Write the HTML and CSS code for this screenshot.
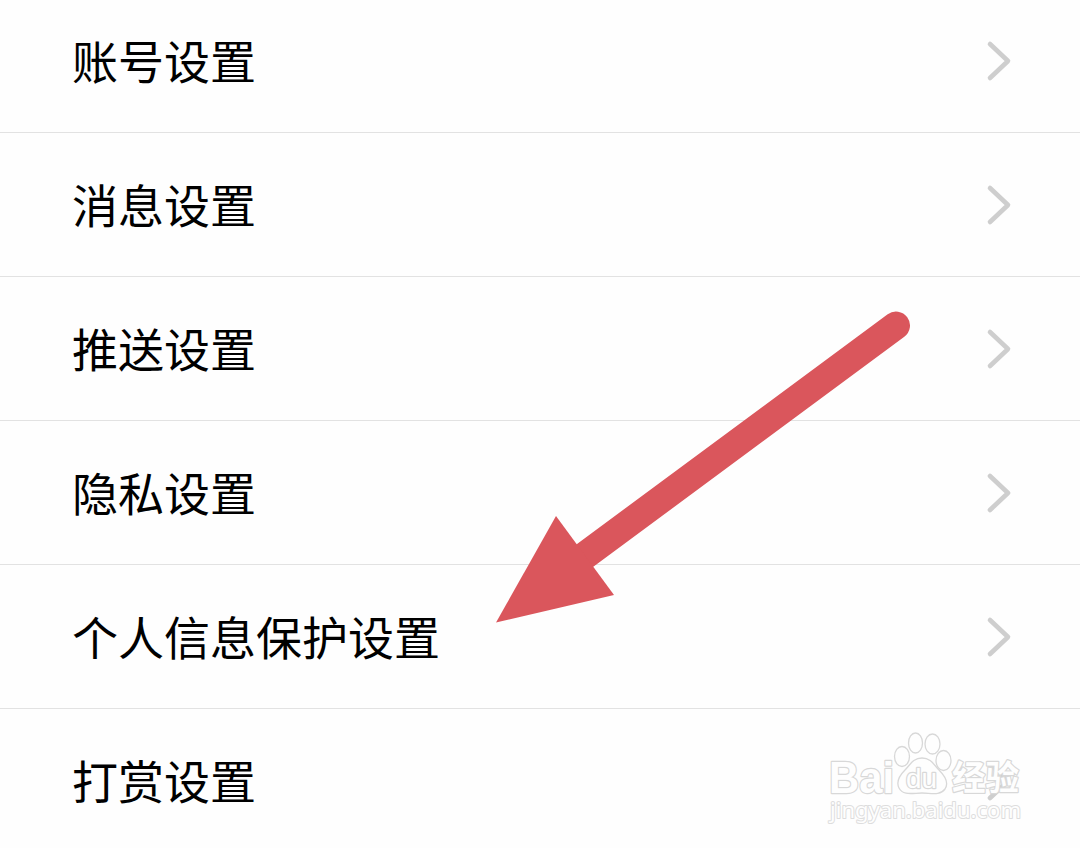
FILE: index.html
```html
<!DOCTYPE html>
<html lang="zh-CN">
<head>
    <meta charset="UTF-8">
    <meta name="viewport" content="width=device-width, initial-scale=1.0">
    <title>设置</title>
    <link rel="stylesheet" href="styles.css">
</head>
<body>
    <div class="settings-page">
        <ul class="settings-list">
            <li class="settings-item">
                <span>账号设置</span>
                <svg class="chevron" viewBox="0 0 26 44"><path d="M4 5L22 22L4 39"/></svg>
            </li>
            <li class="settings-item">
                <span>消息设置</span>
                <svg class="chevron" viewBox="0 0 26 44"><path d="M4 5L22 22L4 39"/></svg>
            </li>
            <li class="settings-item">
                <span>推送设置</span>
                <svg class="chevron" viewBox="0 0 26 44"><path d="M4 5L22 22L4 39"/></svg>
            </li>
            <li class="settings-item">
                <span>隐私设置</span>
                <svg class="chevron" viewBox="0 0 26 44"><path d="M4 5L22 22L4 39"/></svg>
            </li>
            <li class="settings-item">
                <span>个人信息保护设置</span>
                <svg class="chevron" viewBox="0 0 26 44"><path d="M4 5L22 22L4 39"/></svg>
            </li>
            <li class="settings-item">
                <span>打赏设置</span>
                <svg class="chevron" viewBox="0 0 26 44"><path d="M4 5L22 22L4 39"/></svg>
            </li>
        </ul>

        <!-- arrow -->
        <svg class="arrow" viewBox="0 0 420 316">
            <path class="arrow-line" d="M90 247.5L401 17.5"/>
            <path class="arrow-head" d="M1 314.5L61 208L119 287Z"/>
        </svg>

        <!-- watermark -->
        <svg class="watermark" viewBox="0 0 230 115">
            <ellipse cx="92" cy="36.5" rx="7.5" ry="10"/>
            <ellipse cx="105.5" cy="23" rx="7" ry="10"/>
            <ellipse cx="122.5" cy="24" rx="7.5" ry="10"/>
            <ellipse cx="133.5" cy="40.5" rx="7.5" ry="10"/>
            <path d="M112 38C103 38 100 45 95 50C89 56 86 62 89 68C93 76 103 73 112 73C121 73 130 76 135 69C139 63 135 56 129 50C124 45 121 38 112 38Z"/>
            <text class="wm-logo" x="19" y="73" textLength="65" lengthAdjust="spacingAndGlyphs">Bai</text>
            <text class="wm-du" x="96" y="68" textLength="31" lengthAdjust="spacingAndGlyphs">du</text>
            <text class="wm-cn" x="142" y="69.5" textLength="67" lengthAdjust="spacingAndGlyphs">经验</text>
            <text class="wm-url" x="20" y="98" textLength="191" lengthAdjust="spacingAndGlyphs">jingyan.baidu.com</text>
        </svg>
    </div>
</body>
</html>
```

FILE: styles.css
```css
body {
    margin: 0;
    background-color: #fefefe;
    font-family: "Noto Sans CJK SC", sans-serif;
    color: #000;
}

.settings-page {
    position: relative;
    height: 848px;
    overflow: hidden;
}

.settings-list {
    list-style: none;
    margin: -11px 0 0;
    padding: 0;
}

.settings-item {
    display: flex;
    align-items: center;
    justify-content: space-between;
    box-sizing: border-box;
    height: 144px;
    padding: 0 68px 0 72px;
    border-bottom: 1px solid #e2e2e2;
    font-size: 46px;
    line-height: 66px;
}

.settings-item span {
    padding-bottom: 3px;
}

.chevron {
    width: 26px;
    height: 44px;
    fill: none;
    stroke: #cecece;
    stroke-width: 4.6;
    stroke-linecap: round;
    stroke-linejoin: round;
}

.arrow {
    position: absolute;
    left: 495px;
    top: 308px;
    width: 420px;
    height: 316px;
}

.arrow-line {
    fill: none;
    stroke: #da565c;
    stroke-width: 28;
    stroke-linecap: round;
}

.arrow-head {
    fill: #da565c;
}

.watermark {
    position: absolute;
    left: 810px;
    top: 720px;
    width: 230px;
    height: 115px;
    fill: #fefefe;
    stroke: #d8d8d8;
    stroke-width: 1.3;
}

.watermark text {
    paint-order: stroke;
    stroke-width: 2.4;
    stroke-linejoin: round;
}

.wm-logo {
    font: bold 45px "Liberation Sans", sans-serif;
}

.wm-du {
    font: 27px "Liberation Sans", sans-serif;
}

.wm-cn {
    font: bold 34px "Noto Sans CJK SC", sans-serif;
}

.watermark .wm-url {
    font: 22px "Noto Sans", sans-serif;
    stroke: #dddddd;
    stroke-width: 2;
}
```
